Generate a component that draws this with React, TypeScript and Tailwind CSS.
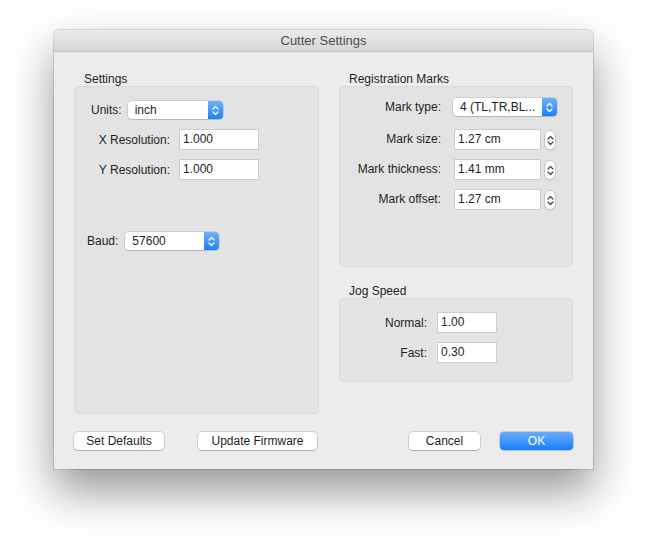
const font = { fontFamily: '"Liberation Sans", Arial, sans-serif' };

function Chevrons({ color = 'white' }: { color?: string }) {
  return (
    <svg width="7" height="11" viewBox="0 0 7 11" fill="none" stroke={color} strokeWidth="1.3" strokeLinecap="round" strokeLinejoin="round">
      <path d="M1 4 L3.5 1.5 L6 4" />
      <path d="M1 7 L3.5 9.5 L6 7" />
    </svg>
  );
}

function Popup({ value, width }: { value: string; width: string }) {
  return (
    <div className={`${width} h-[18px] flex rounded-[4px] bg-white shadow-[0_0_0_0.5px_rgba(0,0,0,0.18),0_1px_1px_rgba(0,0,0,0.12)]`}>
      <div className="flex-1 pl-[7px] text-[12px] leading-[18px] text-[#1e1e1e] overflow-hidden whitespace-nowrap">{value}</div>
      <div className="w-[15px] h-full rounded-r-[4px] bg-gradient-to-b from-[#6bb2fb] to-[#1a7ff9] flex items-center justify-center">
        <Chevrons />
      </div>
    </div>
  );
}

function Field({ value, width }: { value: string; width: string }) {
  return (
    <div className={`${width} h-[21px] bg-white border border-[#cdcdcd] pl-[3px] text-[12px] leading-[19px] text-[#1e1e1e]`}>
      {value}
    </div>
  );
}

function Stepper() {
  return (
    <div className="w-[12px] h-[20px] rounded-[6px] bg-white border border-[#c6c6c6] shadow-[0_1px_1px_rgba(0,0,0,0.08)] flex items-center justify-center">
      <Chevrons color="#4a4a4a" />
    </div>
  );
}

function Group({ title, children, className }: { title: string; children: React.ReactNode; className: string }) {
  return (
    <div className="flex flex-col">
      <div className="h-[14px] pl-[10px] text-[12px] leading-[14px] text-[#1e1e1e]">{title}</div>
      <div className={`rounded-[4px] bg-[#e3e3e3] border border-[#dadada] ${className}`}>{children}</div>
    </div>
  );
}

function Button({ label, width, primary }: { label: string; width: string; primary?: boolean }) {
  return (
    <div
      className={`${width} h-[18px] rounded-[4px] text-center text-[12px] leading-[18px] ${
        primary
          ? 'bg-gradient-to-b from-[#67aefb] to-[#127cfb] text-white shadow-[0_0_0_0.5px_rgba(0,60,160,0.4)]'
          : 'bg-white text-[#1e1e1e] shadow-[0_0_0_0.5px_rgba(0,0,0,0.25),0_1px_1px_rgba(0,0,0,0.15)]'
      }`}
    >
      {label}
    </div>
  );
}

export default function App() {
  return (
    <div className="w-[647px] h-[547px] bg-white pt-[30px] pl-[54px]" style={font}>
      <div className="w-[539px] h-[439px] flex flex-col bg-[#ececec] rounded-t-[5px] shadow-[0_22px_45px_rgba(0,0,0,0.42),0_0_0_1px_rgba(0,0,0,0.13)]">
        <div className="h-[22px] rounded-t-[5px] bg-gradient-to-b from-[#ebebeb] to-[#d6d6d6] border-b border-[#c3c3c3] text-center text-[13px] leading-[22px] text-[#4d4d4d]">
          Cutter Settings
        </div>

        <div className="flex-1 flex flex-col px-[20px] pt-[20px]">
          <div className="flex gap-[20px]">
            <div className="w-[245px]">
              <Group title="Settings" className="h-[328px] pt-[14px]">
                <div className="flex items-center pl-[16px] gap-[6px] text-[12px] text-[#1e1e1e]">
                  <span>Units:</span>
                  <Popup value="inch" width="w-[95px]" />
                </div>
                <div className="flex flex-col gap-[9px] mt-[10px]">
                  {[['X Resolution:', '1.000'], ['Y Resolution:', '1.000']].map(([l, v]) => (
                    <div key={l} className="flex items-center gap-[9px]">
                      <span className="w-[95px] text-right text-[12px] text-[#1e1e1e]">{l}</span>
                      <Field value={v} width="w-[80px]" />
                    </div>
                  ))}
                </div>
                <div className="flex items-center pl-[12px] gap-[7px] mt-[52px] text-[12px] text-[#1e1e1e]">
                  <span>Baud:</span>
                  <Popup value="57600" width="w-[94px]" />
                </div>
              </Group>
            </div>

            <div className="w-[234px] flex flex-col gap-[17px]">
              <Group title="Registration Marks" className="h-[181px] pt-[11px]">
                <div className="flex items-center gap-[12px]">
                  <span className="w-[101px] text-right text-[12px] text-[#1e1e1e]">Mark type:</span>
                  <Popup value="4 (TL,TR,BL..." width="w-[104px]" />
                </div>
                <div className="flex flex-col gap-[9px] mt-[13px]">
                  {[['Mark size:', '1.27 cm'], ['Mark thickness:', '1.41 mm'], ['Mark offset:', '1.27 cm']].map(([l, v]) => (
                    <div key={l} className="flex items-start h-[21px]">
                      <span className="w-[101px] text-right text-[12px] leading-[21px] text-[#1e1e1e]">{l}</span>
                      <div className="ml-[13px]">
                        <Field value={v} width="w-[87px]" />
                      </div>
                      <div className="ml-[3px] mt-[1px]">
                        <Stepper />
                      </div>
                    </div>
                  ))}
                </div>
              </Group>
              <Group title="Jog Speed" className="h-[84px] pt-[13px]">
                <div className="flex flex-col gap-[9px]">
                  {[['Normal:', '1.00'], ['Fast:', '0.30']].map(([l, v]) => (
                    <div key={l} className="flex items-center gap-[10px]">
                      <span className="w-[87px] text-right text-[12px] text-[#1e1e1e]">{l}</span>
                      <Field value={v} width="w-[60px]" />
                    </div>
                  ))}
                </div>
              </Group>
            </div>
          </div>

          <div className="flex items-center mt-[18px]">
            <Button label="Set Defaults" width="w-[90px]" />
            <div className="ml-[34px]">
              <Button label="Update Firmware" width="w-[119px]" />
            </div>
            <div className="ml-auto flex gap-[20px]">
              <Button label="Cancel" width="w-[71px]" />
              <Button label="OK" width="w-[73px]" primary />
            </div>
          </div>
        </div>
      </div>
    </div>
  );
}
